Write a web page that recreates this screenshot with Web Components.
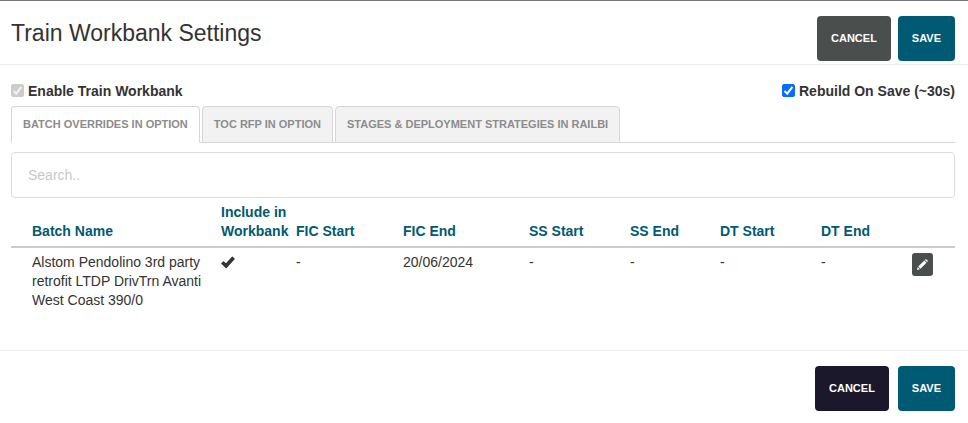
<!DOCTYPE html>
<html lang="en">
<head>
<meta charset="utf-8">
<meta name="viewport" content="width=device-width, initial-scale=1">
<title>Train Workbank Settings</title>
<style>
body {
  margin: 0;
  background: #fff;
  color: #333;
  font: 14px/19px "Liberation Sans", Arial, sans-serif;
}
</style>
</head>
<body>
<workbank-settings></workbank-settings>

<script>
class ActionButton extends HTMLElement {
  constructor() {
    super();
    this.shadowDOM = this.attachShadow({ mode: "open" });
  }
  connectedCallback() {
    this.render();
  }

  render() {
    this.shadowDOM.innerHTML = `
    <style>
    :host {
      display: block;
    }
    button {
      display: block;
      height: 45px;
      padding: 0 14px;
      border: 0;
      border-radius: 4px;
      background: var(--button-colour, #005a73);
      color: #fff;
      font: bold 11px/15px "Liberation Sans", Arial, sans-serif;
      text-transform: uppercase;
      cursor: pointer;
    }
    </style>
    <button type="button"><slot></slot></button>
    `;
  }
}

customElements.define("action-button", ActionButton);

class CheckOption extends HTMLElement {
  constructor() {
    super();
    this.shadowDOM = this.attachShadow({ mode: "open" });
  }
  connectedCallback() {
    this.render();
  }

  render() {
    const disabled = this.hasAttribute("locked") ? "disabled" : "";
    this.shadowDOM.innerHTML = `
    <style>
    :host {
      display: block;
      font-weight: bold;
    }
    label {
      display: flex;
      align-items: center;
      gap: 4px;
    }
    .box {
      display: grid;
      width: 13px;
      height: 13px;
      margin-bottom: 3px;
    }
    input,
    svg {
      grid-area: 1 / 1;
      width: 13px;
      height: 13px;
      margin: 0;
    }
    input {
      appearance: none;
      border-radius: 2px;
      border: 1px solid #767676;
    }
    input:checked {
      border-color: #0a6cff;
      background: #0a6cff;
    }
    input:disabled {
      border-color: #ccc;
      background: #ccc;
    }
    svg {
      visibility: hidden;
      pointer-events: none;
      fill: none;
      stroke: #fff;
      stroke-width: 2;
    }
    input:checked + svg {
      visibility: visible;
    }
    input:disabled + svg {
      stroke: #f2f2f2;
    }
    </style>
    <label>
      <span class="box">
        <input type="checkbox" checked ${disabled}>
        <svg viewBox="0 0 13 13" aria-hidden="true"><path d="M2.5 7 5.2 9.7 10.4 2.8"/></svg>
      </span>
      <span><slot></slot></span>
    </label>
    `;
  }
}

customElements.define("check-option", CheckOption);

class TabBar extends HTMLElement {
  constructor() {
    super();
    this.shadowDOM = this.attachShadow({ mode: "open" });
  }
  connectedCallback() {
    this.render();
  }

  render() {
    this.shadowDOM.innerHTML = `
    <style>
    :host {
      display: block;
      border-bottom: 1px solid #d6d6d6;
    }
    nav {
      display: flex;
      gap: 2px;
      margin-bottom: -1px;
    }
    ::slotted(button) {
      height: 37px;
      padding: 0 11px;
      border: 1px solid #d6d6d6;
      border-radius: 4px 4px 0 0;
      background: #f2f2f2;
      color: #8c8c8c;
      font: bold 11px/15px "Liberation Sans", Arial, sans-serif;
      text-transform: uppercase;
      cursor: pointer;
    }
    ::slotted(button[aria-selected="true"]) {
      border-bottom-color: #fff;
      background: #fff;
    }
    </style>
    <nav role="tablist"><slot></slot></nav>
    `;
  }
}

customElements.define("tab-bar", TabBar);

class SearchBox extends HTMLElement {
  constructor() {
    super();
    this.shadowDOM = this.attachShadow({ mode: "open" });
  }
  connectedCallback() {
    this.render();
  }

  render() {
    this.shadowDOM.innerHTML = `
    <style>
    :host {
      display: block;
    }
    input {
      display: block;
      box-sizing: border-box;
      width: 100%;
      height: 46px;
      padding: 0 16px;
      border: 1px solid #ddd;
      border-radius: 4px;
      background: #fff;
      color: #333;
      font: inherit;
    }
    input::placeholder {
      color: #c8c8c8;
    }
    </style>
    <input type="text" aria-label="Search" placeholder="Search..">
    `;
  }
}

customElements.define("search-box", SearchBox);

class BatchTable extends HTMLElement {
  constructor() {
    super();
    this.shadowDOM = this.attachShadow({ mode: "open" });
  }
  connectedCallback() {
    this.render();
  }

  render() {
    this.shadowDOM.innerHTML = `
    <style>
    :host {
      display: block;
    }
    table {
      width: 100%;
      table-layout: fixed;
      border-collapse: separate;
      border-spacing: 0;
    }
    .name { width: 205px; }
    .include { width: 75px; }
    .fic-start { width: 107px; }
    .fic-end { width: 126px; }
    .ss-start { width: 101px; }
    .ss-end { width: 90px; }
    .dt-start { width: 101px; }
    .dt-end { width: 91px; }
    .edit { width: 48px; }
    th,
    td {
      padding: 5px 0 5px 5px;
      text-align: left;
    }
    th {
      border-bottom: 2px solid #ccc;
      color: #005a73;
      vertical-align: bottom;
    }
    td {
      vertical-align: top;
    }
    th:first-child,
    td:first-child {
      padding-left: 21px;
    }
    .tick {
      display: block;
      width: 14px;
      height: 19px;
      fill: #333;
    }
    button {
      display: grid;
      place-items: center;
      width: 21px;
      height: 23px;
      padding: 0;
      border: 0;
      border-radius: 3px;
      background: #4a4f4e;
      cursor: pointer;
    }
    button svg {
      width: 11px;
      height: 11px;
      fill: #fff;
    }
    </style>
    <table>
      <colgroup>
        <col class="name"><col class="include"><col class="fic-start">
        <col class="fic-end"><col class="ss-start"><col class="ss-end">
        <col class="dt-start"><col class="dt-end"><col class="edit">
      </colgroup>
      <thead>
        <tr>
          <th>Batch Name</th>
          <th>Include in Workbank</th>
          <th>FIC Start</th>
          <th>FIC End</th>
          <th>SS Start</th>
          <th>SS End</th>
          <th>DT Start</th>
          <th>DT End</th>
          <th></th>
        </tr>
      </thead>
      <tbody>
        <tr>
          <td>Alstom Pendolino 3rd party retrofit LTDP DrivTrn Avanti West Coast 390/0</td>
          <td>
            <svg class="tick" viewBox="0 0 14 19" role="img" aria-label="Yes">
              <path d="M.3 10.3 2 8.4Q2.4 8 2.9 8.4L5 10.2 10.9 3.8Q11.3 3.4 11.7 3.8L13.6 5.4Q14 5.8 13.6 6.2L5.7 14.9Q5.2 15.4 4.6 15L.8 11.3Q0 10.7.3 10.3Z"/>
            </svg>
          </td>
          <td>-</td>
          <td>20/06/2024</td>
          <td>-</td>
          <td>-</td>
          <td>-</td>
          <td>-</td>
          <td>
            <button type="button" aria-label="Edit">
              <svg viewBox="0 0 11 11" aria-hidden="true">
                <path d="M0 11 .7 8.1 2.9 10.3ZM1.3 7.5 7.3 1.5 9.5 3.7 3.5 9.7ZM7.9.9 8.5.3Q9 0 9.5.4L10.6 1.5Q11 2 10.7 2.5L10.1 3.1Z"/>
              </svg>
            </button>
          </td>
        </tr>
      </tbody>
    </table>
    `;
  }
}

customElements.define("batch-table", BatchTable);

class WorkbankSettings extends HTMLElement {
  constructor() {
    super();
    this.shadowDOM = this.attachShadow({ mode: "open" });
  }
  connectedCallback() {
    this.render();
  }

  render() {
    this.shadowDOM.innerHTML = `
    <style>
    :host {
      display: block;
      border-top: 1px solid #77757d;
    }
    header,
    footer {
      display: flex;
      justify-content: space-between;
    }
    header {
      padding: 15px 13px 3px 11px;
      border-bottom: 1px solid #eee;
    }
    h1 {
      margin: 3px 0 0;
      font-size: 23px;
      font-weight: normal;
      line-height: 29px;
    }
    .actions {
      display: flex;
      gap: 7px;
    }
    main {
      padding: 17px 13px 35px 11px;
    }
    .options {
      display: flex;
      justify-content: space-between;
      margin-bottom: 5px;
    }
    search-box {
      margin: 9px 0 0;
    }
    footer {
      justify-content: flex-end;
      padding: 15px 13px 12px;
      border-top: 1px solid #eee;
    }
    footer .actions {
      gap: 9px;
    }
    header .cancel {
      --button-colour: #4a4f4e;
    }
    footer .cancel {
      --button-colour: #1b182b;
    }
    </style>
    <header>
      <h1>Train Workbank Settings</h1>
      <div class="actions">
        <action-button class="cancel">Cancel</action-button>
        <action-button>Save</action-button>
      </div>
    </header>
    <main>
      <div class="options">
        <check-option locked>Enable Train Workbank</check-option>
        <check-option>Rebuild On Save (~30s)</check-option>
      </div>
      <tab-bar>
        <button type="button" role="tab" aria-selected="true">Batch Overrides in Option</button>
        <button type="button" role="tab" aria-selected="false">TOC RFP in Option</button>
        <button type="button" role="tab" aria-selected="false">Stages &amp; Deployment Strategies in RailBI</button>
      </tab-bar>
      <search-box></search-box>
      <batch-table></batch-table>
    </main>
    <footer>
      <div class="actions">
        <action-button class="cancel">Cancel</action-button>
        <action-button>Save</action-button>
      </div>
    </footer>
    `;
  }
}

customElements.define("workbank-settings", WorkbankSettings);
</script>
</body>
</html>
